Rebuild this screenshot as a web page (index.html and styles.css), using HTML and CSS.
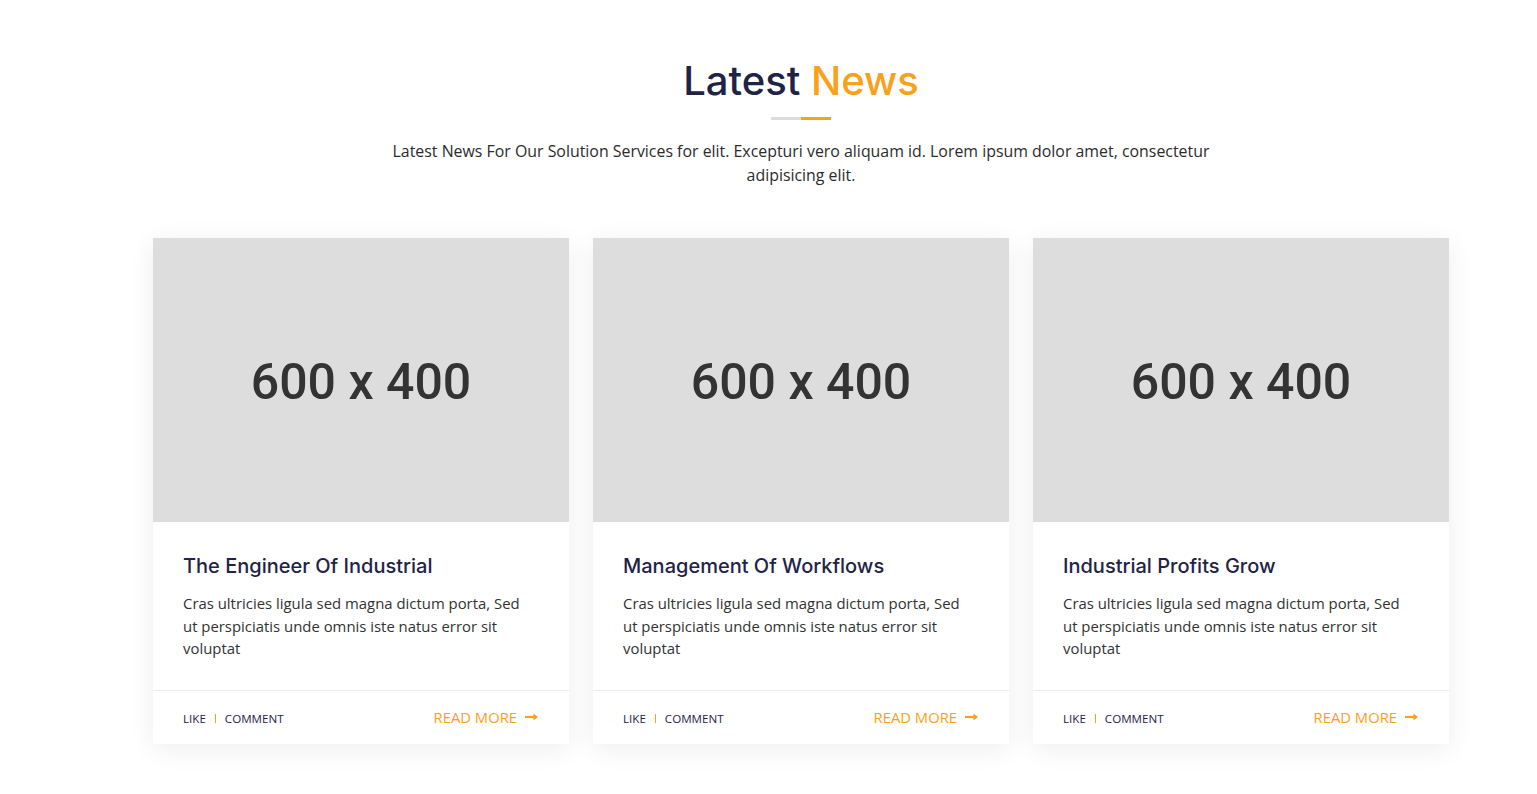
FILE: index.html
```html
<!DOCTYPE html>
<html lang="en">
<head>
<meta charset="utf-8">
<title>Latest News</title>
<link rel="stylesheet" href="styles.css">
</head>
<body>
<section class="news">
  <div class="container">
    <div class="heading">
      <h2 class="title">Latest <span class="accent">News</span></h2>
      <div class="bar"><span class="bar-gray"></span><span class="bar-orange"></span></div>
      <p class="lead">Latest News For Our Solution Services for elit. Excepturi vero aliquam id. Lorem ipsum dolor amet, consectetur adipisicing elit.</p>
    </div>
    <div class="cards">
      <article class="card">
        <div class="thumb">600 x 400</div>
        <div class="body">
          <h3 class="card-title">The Engineer Of Industrial</h3>
          <p class="card-text">Cras ultricies ligula sed magna dictum porta, Sed ut perspiciatis unde omnis iste natus error sit voluptat</p>
        </div>
        <div class="foot">
          <div class="meta"><span>LIKE</span><span class="sep"></span><span>COMMENT</span></div>
          <a class="more" href="#">READ MORE <svg width="14" height="10" viewBox="0 0 14 10"><path d="M0 5h11" stroke="#f9a11b" stroke-width="2.2"/><path d="M8.5 1.5 L13 5 L8.5 8.5Z" fill="#f9a11b"/></svg></a>
        </div>
      </article>
      <article class="card">
        <div class="thumb">600 x 400</div>
        <div class="body">
          <h3 class="card-title">Management Of Workflows</h3>
          <p class="card-text">Cras ultricies ligula sed magna dictum porta, Sed ut perspiciatis unde omnis iste natus error sit voluptat</p>
        </div>
        <div class="foot">
          <div class="meta"><span>LIKE</span><span class="sep"></span><span>COMMENT</span></div>
          <a class="more" href="#">READ MORE <svg width="14" height="10" viewBox="0 0 14 10"><path d="M0 5h11" stroke="#f9a11b" stroke-width="2.2"/><path d="M8.5 1.5 L13 5 L8.5 8.5Z" fill="#f9a11b"/></svg></a>
        </div>
      </article>
      <article class="card">
        <div class="thumb">600 x 400</div>
        <div class="body">
          <h3 class="card-title">Industrial Profits Grow</h3>
          <p class="card-text">Cras ultricies ligula sed magna dictum porta, Sed ut perspiciatis unde omnis iste natus error sit voluptat</p>
        </div>
        <div class="foot">
          <div class="meta"><span>LIKE</span><span class="sep"></span><span>COMMENT</span></div>
          <a class="more" href="#">READ MORE <svg width="14" height="10" viewBox="0 0 14 10"><path d="M0 5h11" stroke="#f9a11b" stroke-width="2.2"/><path d="M8.5 1.5 L13 5 L8.5 8.5Z" fill="#f9a11b"/></svg></a>
        </div>
      </article>
    </div>
  </div>
</section>
</body>
</html>
```

FILE: styles.css
```css
* { box-sizing: border-box; }
html, body { margin: 0; padding: 0; background: #fff; }
body {
  font-family: "Open Sans", "Liberation Sans", sans-serif;
  color: #333;
}
.news { padding-top: 56px; padding-bottom: 40px; }
.container {
  width: 1320px;
  margin-left: 141px;
  padding: 0 12px;
}
.heading { text-align: center; }
.title {
  margin: 0;
  font-family: Inter, "Open Sans", sans-serif;
  font-size: 40px;
  font-weight: 500;
  line-height: 50px;
  color: #1f2346;
  letter-spacing: 0;
}
.accent { color: #f9a11b; }
.bar {
  display: flex;
  justify-content: center;
  margin-top: 11px;
  height: 3px;
}
.bar-gray { width: 30px; height: 3px; background: #dcdcdc; }
.bar-orange { width: 30px; height: 3px; background: #f9a11b; }
.lead {
  max-width: 840px;
  margin: 19px auto 0;
  font-size: 15.9px;
  line-height: 24px;
  color: #2b2b2b;
}
.cards {
  display: grid;
  grid-template-columns: repeat(3, 416px);
  gap: 24px;
  margin-top: 51px;
}
.card {
  background: #fff;
  box-shadow: 0 5px 25px rgba(0,0,0,0.07);
}
.thumb {
  height: 284px;
  padding-top: 4px;
  background: #dddddd;
  display: flex;
  align-items: center;
  justify-content: center;
  font-family: Roboto, sans-serif;
  font-size: 50px;
  font-weight: 500;
  color: #333;
}
.body { padding: 29px 34px 30px 30px; }
.card-title {
  margin: 0;
  font-family: Inter, sans-serif;
  font-size: 20px;
  font-weight: 500;
  line-height: 30px;
  color: #1f2346;
}
.card-text {
  margin: 11px 0 0;
  font-size: 14.9px;
  line-height: 22.5px;
  color: #333;
}
.foot {
  border-top: 1px solid #ececec;
  height: 54px;
  padding: 0 30px;
  display: flex;
  align-items: center;
  justify-content: space-between;
}
.meta {
  display: flex;
  align-items: center;
  font-size: 11.6px;
  color: #1f2346;
  padding-top: 2px;
}
.sep { width: 1px; height: 9px; background: #f9a11b; margin: 0 9px; }
.more {
  display: flex;
  align-items: center;
  gap: 8px;
  font-size: 14.8px;
  color: #f9a11b;
  text-decoration: none;
}
```
